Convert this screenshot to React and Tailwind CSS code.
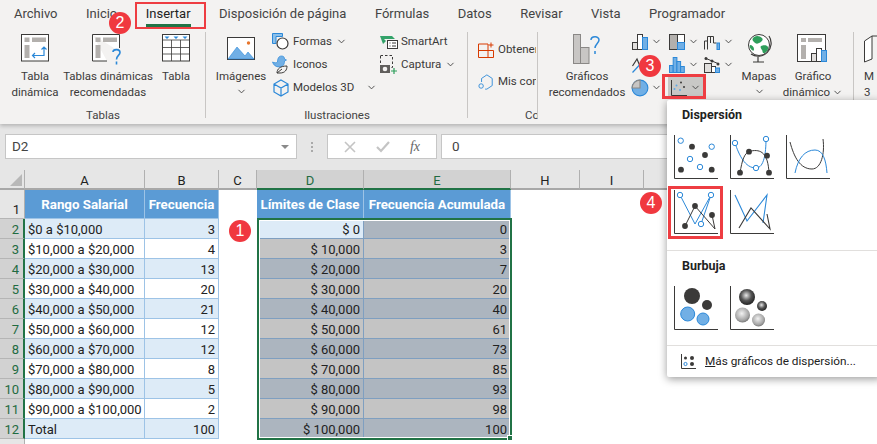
import { ChevronDown } from 'lucide-react';

const BLUE = '#2b88d8';
const DARK = '#3b3a39';
const GREY = '#b3b0ad';

const rangeRows = [
  ['$0 a $10,000', 3, '$ 0', 0],
  ['$10,000 a $20,000', 4, '$ 10,000', 3],
  ['$20,000 a $30,000', 13, '$ 20,000', 7],
  ['$30,000 a $40,000', 20, '$ 30,000', 20],
  ['$40,000 a $50,000', 21, '$ 40,000', 40],
  ['$50,000 a $60,000', 12, '$ 50,000', 61],
  ['$60,000 a $70,000', 12, '$ 60,000', 73],
  ['$70,000 a $80,000', 8, '$ 70,000', 85],
  ['$80,000 a $90,000', 5, '$ 80,000', 93],
  ['$90,000 a $100,000', 2, '$ 90,000', 98],
  ['Total', 100, '$ 100,000', 100],
];

function Chevron({ className = '' }) {
  return <ChevronDown className={`w-[11px] h-[11px] text-[#444] shrink-0 ${className}`} strokeWidth={2} />;
}

function Badge({ n, className }) {
  return (
    <div className={`absolute z-30 w-[22px] h-[22px] rounded-full bg-[#f0383f] text-white flex items-center justify-center text-[16px] font-['Liberation_Sans',sans-serif] ${className}`}>
      {n}
    </div>
  );
}

function PivotIcon() {
  return (
    <svg width="28" height="28" viewBox="0 0 28 28">
      <rect x=".5" y=".5" width="27" height="26.5" fill="#fff" stroke={DARK} />
      <rect x="3.5" y="3.5" width="5" height="4.5" fill={GREY} />
      <rect x="11" y="3.5" width="14" height="4.5" fill={GREY} />
      <rect x="3.5" y="11" width="5" height="13" fill={GREY} />
      <path d="M13 22.5h11v-8M21.5 16.5l2.5-2.5 2.5 2.5M15 20l-2.5 2.5 2.5 2.5" transform="translate(-1 -1)" fill="none" stroke={BLUE} strokeWidth="1.2" />
    </svg>
  );
}

function PivotHelpIcon() {
  return (
    <svg width="32" height="32" viewBox="0 0 32 32">
      <path d="M.5.5h27v17M15 27H.5V.5" fill="#fff" stroke={DARK} />
      <rect x="3.5" y="3.5" width="5" height="4.5" fill={GREY} />
      <rect x="11" y="3.5" width="14" height="4.5" fill={GREY} />
      <rect x="3.5" y="11" width="5" height="13" fill={GREY} />
      <rect x="15" y="14" width="16" height="18" fill="#f3f2f1" />
      <path d="M21 18c0-3 7-3.500 7 .5 0 3-3.500 3-3.500 7M24.500 27.500v3" fill="none" stroke={BLUE} strokeWidth="1.6" />
    </svg>
  );
}

function TableIcon() {
  return (
    <svg width="28" height="28" viewBox="0 0 28 28">
      <rect x=".5" y=".5" width="27" height="26.500" fill="#fff" stroke={DARK} />
      <path d="M.5 6h27M.5 13.500h27M.5 20h27M9.500 6v21M18.500 6v21" stroke={DARK} strokeWidth=".8" />
      <path d="M2.500 2.500h5L5 5zM11.500 2.500h5L14 5zM20.500 2.500h5L23 5z" fill={BLUE} />
    </svg>
  );
}

function PictureIcon() {
  return (
    <svg width="28" height="24" viewBox="0 0 28 24">
      <rect x=".5" y=".5" width="27" height="22" fill="#fff" stroke={DARK} />
      <path d="M1 22 10 10l8 9 3-4 6 7z" fill="#71afe5" stroke="#2b88d8" strokeWidth=".6" />
      <circle cx="21.500" cy="6" r="1.700" fill="#e8762c" />
    </svg>
  );
}

function ShapesIcon() {
  return (
    <svg width="18" height="18" viewBox="0 0 18 18">
      <path d="M.5.5h10v3H4v7H.5z" fill="#8cc0ea" stroke={BLUE} />
      <circle cx="10.500" cy="10.500" r="5.500" fill="#fff" stroke={DARK} strokeWidth="1.200" />
    </svg>
  );
}

function IconsIcon() {
  return (
    <svg width="18" height="19" viewBox="0 0 18 19">
      <path d="M.5 7c2 1 4 1 5 0 0-3 1-6 4-6 2 0 3 1 3 3l2 1-2 1c0 4-2 6-5 6-4 0-6-2-7-5z" fill="#71afe5" stroke={BLUE} strokeWidth=".7" />
      <path d="M5 18c0-4 3-7 10-7 0 4-2 7-7 7zM5 18l5-4" fill="#f3f2f1" stroke={DARK} />
    </svg>
  );
}

function CubeIcon() {
  return (
    <svg width="18" height="18" viewBox="0 0 18 18" fill="none" stroke={BLUE} strokeWidth="1.200">
      <path d="M9 1l7 4v8l-7 4-7-4V5zM2 5l7 4 7-4M9 9v8" />
    </svg>
  );
}

function SmartArtIcon() {
  return (
    <svg width="18" height="14" viewBox="0 0 18 14">
      <path d="M0 1h12l3 3H4l2 2-3 3z" fill="#33a36a" />
      <rect x="7.500" y="5.500" width="10" height="8" fill="#fff" stroke={DARK} />
      <path d="M9.500 8h1M12 8h4M9.500 11h1M12 11h4" stroke={DARK} />
    </svg>
  );
}

function CaptureIcon() {
  return (
    <svg width="18" height="19" viewBox="0 0 18 19">
      <rect x=".5" y=".5" width="12" height="12" fill="none" stroke={DARK} strokeDasharray="2.500 2" />
      <rect x="0" y="10" width="10" height="8" fill="#605e5c" />
      <circle cx="5" cy="14" r="2.300" fill="#f3f2f1" />
      <path d="M14 13v6M11 16h6" stroke="#2e9e5b" strokeWidth="1.200" />
    </svg>
  );
}

function GetAddinIcon() {
  return (
    <svg width="16" height="16" viewBox="0 0 16 16" fill="none" stroke="#d83b01" strokeWidth="1" className="shrink-0">
      <path d="M.5 2h9.500v13.500H.5zM.5 8.500H15.500V15.500H10M13 .5v5M10.500 3h5" />
    </svg>
  );
}

function MyAddinIcon() {
  return (
    <svg width="16" height="18" viewBox="0 0 18 18" fill="none" stroke={BLUE} strokeWidth="1" className="shrink-0">
      <path d="M4 9V5l6-4 6 4v8l-6 4H8" />
      <circle cx="3.500" cy="13.500" r="2.500" />
    </svg>
  );
}

function RecommendedChartIcon() {
  return (
    <svg width="29" height="30" viewBox="0 0 29 30">
      <rect x=".5" y=".5" width="7" height="29" fill="#c8c6c4" stroke="#8a8886" />
      <rect x="7.500" y="13.500" width="8.500" height="16" fill="#c8c6c4" stroke="#8a8886" />
      <path d="M18 6c0-4 8-4.500 8 0 0 3-4 4-4 8M22 17v3" fill="none" stroke={BLUE} strokeWidth="1.500" />
    </svg>
  );
}

// the small chart buttons in the Gráficos group
function MiniChart({ kind }) {
  const common = { width: 16, height: 16, viewBox: '0 0 16 16' };
  if (kind === 'bars') {
    return (
      <svg {...common}>
        <rect x=".5" y="8.500" width="5" height="7" fill="#e1dfdd" stroke={DARK} />
        <rect x="5.500" y=".5" width="5" height="15" fill="#fff" stroke={DARK} />
        <rect x="10.500" y="3.500" width="5" height="12" fill="#71afe5" stroke={BLUE} />
      </svg>
    );
  }
  if (kind === 'treemap') {
    return (
      <svg {...common}>
        <rect x=".5" y=".5" width="8" height="15" fill={GREY} stroke={DARK} />
        <rect x="8.500" y=".5" width="7" height="8" fill="#fff" stroke={DARK} />
        <rect x="8.500" y="8.500" width="7" height="7" fill="#71afe5" stroke={BLUE} />
      </svg>
    );
  }
  if (kind === 'waterfall') {
    return (
      <svg {...common} fill="none">
        <path d="M.5 15.500V7h3V2.500h6V9h3" stroke={DARK} />
        <rect x="13" y="9" width="2.500" height="6.500" fill="#71afe5" stroke={BLUE} />
        <path d="M3.500 7v8.500M6.500 2.500V9" stroke={DARK} />
      </svg>
    );
  }
  if (kind === 'line') {
    return (
      <svg {...common} fill="none">
        <path d="M.5 15.500 14 1" stroke={BLUE} strokeWidth="1.200" />
        <path d="M.5 9 5 2l5 12" stroke={DARK} strokeWidth="1.200" />
      </svg>
    );
  }
  if (kind === 'histogram') {
    return (
      <svg {...common}>
        <rect x=".5" y="8.500" width="3.700" height="7" fill="#71afe5" stroke={BLUE} />
        <rect x="4.200" y=".5" width="3.700" height="15" fill="#71afe5" stroke={BLUE} />
        <rect x="7.900" y="4.500" width="3.700" height="11" fill="#71afe5" stroke={BLUE} />
        <rect x="11.600" y="9.500" width="3.700" height="6" fill="#71afe5" stroke={BLUE} />
      </svg>
    );
  }
  if (kind === 'combo') {
    return (
      <svg {...common}>
        <rect x=".5" y="6.500" width="7" height="9" fill="#e1dfdd" stroke={DARK} />
        <rect x="7.500" y="9.500" width="4" height="6" fill="#fff" stroke={DARK} />
        <rect x="11.500" y="11" width="4" height="4.500" fill="#71afe5" stroke={BLUE} />
        <path d="M1 1l7 3 7 3" stroke={DARK} fill="none" />
        <circle cx="2" cy="1.500" r="1.500" fill={DARK} />
        <circle cx="8" cy="4" r="1.500" fill={DARK} />
        <circle cx="14" cy="7" r="1.500" fill={DARK} />
      </svg>
    );
  }
  return (
    <svg {...common} width="18" height="18">
      <circle cx="8" cy="8" r="7" fill="#71afe5" stroke={BLUE} />
      <path d="M8 8V1a7 7 0 0 0-7 7z" fill="#c8c6c4" stroke="#8a8886" />
    </svg>
  );
}

function ScatterMini() {
  return (
    <svg width="16" height="16" viewBox="0 0 16 16">
      <path d="M.5 0v15.500H16" fill="none" stroke={DARK} />
      <circle cx="10" cy="2.500" r="1" fill={DARK} />
      <circle cx="5.500" cy="5.500" r="1" fill="#5ea9e6" />
      <circle cx="3.500" cy="9" r="1" fill="#5ea9e6" />
      <circle cx="9" cy="10" r="1" fill="#5ea9e6" />
      <circle cx="13" cy="7" r="1" fill={DARK} />
    </svg>
  );
}

function GlobeIcon() {
  return (
    <svg width="28" height="30" viewBox="0 0 28 30">
      <path d="M24 3a13 13 0 0 1-18 18M13 24v5M8 29h11" fill="none" stroke={DARK} strokeWidth="1.200" />
      <circle cx="14" cy="12" r="10.500" fill="#fff" stroke={DARK} />
      <path d="M9 4c3-2 6-1 8 1s-1 4-3 5-3 1-5-1-2-3 0-5zM16 13c3-1 6-1 7 1s-2 6-4 6-1-2-2-3-2-3-1-4zM5 12c2 0 4 2 4 4s-1 2-2 1-3-3-2-5z" fill="#2e9e5b" />
    </svg>
  );
}

function PivotChartIcon() {
  return (
    <svg width="32" height="30" viewBox="0 0 32 30">
      <rect x=".5" y=".5" width="28" height="27" fill="#fff" stroke={DARK} />
      <rect x="4" y="4" width="5" height="4" fill={GREY} />
      <rect x="11" y="4" width="14" height="4" fill={GREY} />
      <rect x="4" y="11" width="5" height="14" fill={GREY} />
      <rect x="14.500" y="19.500" width="5" height="8" fill="#e1dfdd" stroke={DARK} />
      <rect x="19.500" y="14.500" width="5" height="13" fill="#fff" stroke={DARK} />
      <rect x="24.500" y="16.500" width="5" height="11" fill="#71afe5" stroke={BLUE} />
    </svg>
  );
}

function Axes({ size = 44 }) {
  return <path d={`M.5 0V${size - .5}H${size}`} fill="none" stroke={DARK} strokeWidth="1" />;
}

function Open({ x, y }) {
  return <circle cx={x} cy={y} r="2.700" fill="#fff" stroke={BLUE} strokeWidth="1" />;
}

function Solid({ x, y }) {
  return <circle cx={x} cy={y} r="2.900" fill={DARK} />;
}

function Thumb({ children }) {
  return <svg width="44" height="44" viewBox="0 0 44 44"><Axes />{children}</svg>;
}

function BubbleShade({ x, y, r, id }) {
  return <circle cx={x} cy={y} r={r} fill={`url(#${id})`} />;
}

function LargeButton({ icon, lines, width }) {
  return (
    <div className={`flex flex-col items-center shrink-0 ${width}`}>
      <div className="h-[41px] pt-[7px] flex justify-center">{icon}</div>
      {lines.map((l) => (
        <div key={l} className="h-4 leading-4 whitespace-nowrap">{l}</div>
      ))}
    </div>
  );
}

function SmallButton({ icon, label, chevron }) {
  return (
    <div className="h-[23px] flex items-center gap-[3px] whitespace-nowrap">
      <div className="w-[18px] flex justify-center shrink-0">{icon}</div>
      {label}
      {chevron && <Chevron className="ml-[1px]" />}
    </div>
  );
}

function Group({ width, label, labelClass = 'justify-center', children }) {
  return (
    <div className={`relative shrink-0 h-full flex flex-col ${width}`}>
      <div className="flex-1 flex min-h-0">{children}</div>
      <div className={`h-[16px] leading-4 flex overflow-hidden text-[#444] whitespace-nowrap ${labelClass}`}>{label}</div>
      <div className="absolute right-0 top-[5px] bottom-[5px] w-px bg-[#c8c6c4]" />
    </div>
  );
}

function Ribbon() {
  return (
    <div className="relative z-10 h-[124px] bg-[#f3f2f1] shadow-[0_2px_4px_rgba(0,0,0,0.22)] text-[11.5px] text-[#3b3a39] overflow-hidden">
      <div className="h-[27px] flex items-center pl-[14px] gap-[28.5px] text-[13px] text-[#444]">
        <span>Archivo</span>
        <span>Inicio</span>
        <span className="relative text-[#222]">
          Insertar
          <span className="absolute left-0 right-0 -bottom-[4px] h-[3px] bg-[#217346]" />
        </span>
        <span>Disposición de página</span>
        <span>Fórmulas</span>
        <span>Datos</span>
        <span>Revisar</span>
        <span>Vista</span>
        <span>Programador</span>
      </div>
      <div className="h-[96px] flex">
        <Group width="w-[206px]" label="Tablas">
          <div className="flex pl-[4px]">
            <LargeButton width="w-[62px]" icon={<PivotIcon />} lines={['Tabla', 'dinámica']} />
            <LargeButton width="w-[84px]" icon={<PivotHelpIcon />} lines={['Tablas dinámicas', 'recomendadas']} />
            <LargeButton width="w-[52px]" icon={<TableIcon />} lines={['Tabla']} />
          </div>
        </Group>
        <Group width="w-[262px]" label="Ilustraciones">
          <div className="flex pl-[4px]">
            <div className="w-[62px] shrink-0 flex flex-col items-center">
              <div className="h-[41px] pt-[10px]"><PictureIcon /></div>
              <div className="h-4 leading-4">Imágenes</div>
              <Chevron className="mt-[2px]" />
            </div>
            <div className="w-[108px] shrink-0 pt-[3px]">
              <SmallButton icon={<ShapesIcon />} label="Formas" chevron />
              <SmallButton icon={<IconsIcon />} label="Iconos" />
              <SmallButton icon={<CubeIcon />} label={<span className="mr-[8px]">Modelos 3D</span>} chevron />
            </div>
            <div className="pt-[3px]">
              <SmallButton icon={<SmartArtIcon />} label="SmartArt" />
              <SmallButton icon={<CaptureIcon />} label="Captura" chevron />
            </div>
          </div>
        </Group>
        <Group width="w-[70px]" label="Complementos" labelClass="pl-[57px]">
          <div className="pl-[10px] pt-[7px] w-[68px] overflow-hidden">
            <div className="h-[32px] flex items-center gap-[4px] whitespace-nowrap"><GetAddinIcon />Obtener complementos</div>
            <div className="h-[32px] flex items-center gap-[4px] whitespace-nowrap"><MyAddinIcon />Mis complementos</div>
          </div>
        </Group>
        <Group width="w-[316px]" label="">
          <div className="flex pl-[7px]">
            <LargeButton width="w-[84px]" icon={<RecommendedChartIcon />} lines={['Gráficos', 'recomendados']} />
            <div className="w-[103px] shrink-0 pt-[3px] pl-[3px] grid grid-cols-[37px_35px_31px] grid-rows-[23px_23px_23px]">
              {['bars', 'treemap', 'waterfall', 'line', 'histogram', 'combo'].map((k) => (
                <div key={k} className="flex items-center gap-[3px]"><MiniChart kind={k} /><Chevron /></div>
              ))}
              <div className="flex items-center gap-[2px] -ml-[1px]"><MiniChart kind="pie" /><Chevron /></div>
              <div className="col-span-2 flex items-center">
                <div className="w-[36px] h-[21px] -ml-[1px] bg-[#c8c8c6] flex items-center justify-center gap-[3px]">
                  <ScatterMini /><Chevron />
                </div>
              </div>
            </div>
            <div className="w-[52px] shrink-0 flex flex-col items-center ml-[1px]">
              <div className="h-[41px] pt-[6px]"><GlobeIcon /></div>
              <div className="h-4 leading-4">Mapas</div>
              <Chevron className="mt-[2px]" />
            </div>
            <div className="w-[56px] shrink-0 flex flex-col items-center">
              <div className="h-[41px] pt-[7px]"><PivotChartIcon /></div>
              <div className="h-4 leading-4">Gráfico</div>
              <div className="h-4 leading-4 whitespace-nowrap flex items-center gap-[2px]">dinámico<Chevron /></div>
            </div>
          </div>
        </Group>
        <div className="pl-[10px] pt-[8px] flex flex-col">
          <div className="h-[33px] w-[30px]">
            <svg width="30" height="30" viewBox="0 0 30 30" fill="none" stroke={DARK}>
              <path d="M.5 6 8 1v23L.5 27z" fill="#fff" />
              <path d="M8 1h20" />
            </svg>
          </div>
          <div className="h-4 leading-4">M</div>
          <div className="h-4 leading-4">3</div>
        </div>
      </div>
    </div>
  );
}

function FormulaBar() {
  return (
    <div className="h-[46px] bg-[#e6e6e6] flex items-start pt-[10px] pl-[5px] text-[13.5px] text-[#444]">
      <div className="w-[292px] h-[25px] bg-white border border-[#c6c6c6] flex items-center justify-between pl-[6px] pr-[7px]">
        <span>D2</span>
        <span className="w-0 h-0 border-l-[4px] border-r-[4px] border-t-[4px] border-l-transparent border-r-transparent border-t-[#8a8a8a]" />
      </div>
      <div className="w-[30px] h-[25px] flex flex-col items-center justify-center gap-[2px]">
        <span className="w-[2px] h-[2px] bg-[#aaa]" />
        <span className="w-[2px] h-[2px] bg-[#aaa]" />
        <span className="w-[2px] h-[2px] bg-[#aaa]" />
      </div>
      <div className="w-[110px] h-[25px] bg-white border border-[#c6c6c6] flex items-center justify-around px-[6px] text-[#bbb]">
        <svg width="12" height="12" viewBox="0 0 12 12" stroke="#c4c4c4" strokeWidth="1.600"><path d="M1 1l10 10M11 1 1 11" /></svg>
        <svg width="14" height="12" viewBox="0 0 14 12" fill="none" stroke="#c4c4c4" strokeWidth="2.200"><path d="M1 6l4 4 8-9" /></svg>
        <span className="font-['Liberation_Serif',serif] italic text-[#666] text-[14px]">fx</span>
      </div>
      <div className="ml-[4px] flex-1 h-[25px] bg-white border border-[#c6c6c6] flex items-center pl-[10px]">0</div>
    </div>
  );
}

function ColHeader({ label, active, last }) {
  return (
    <div className={`h-[20px] pt-[2px] flex items-center justify-center border-b-2 ${last ? '' : 'border-r border-r-[#b0b0b0]'} ${active ? 'bg-[#d2d2d2] text-[#1f6b41] border-b-[#217346]' : 'bg-[#e6e6e6] text-[#222] border-b-[#a8a8a8]'}`}>
      {label}
    </div>
  );
}

function RowHeader({ n, tall }) {
  return (
    <div className={`${tall ? 'h-[29px] items-end pb-[2px] bg-[#e6e6e6] text-[#222] border-r-[#b0b0b0] border-r' : 'h-[20px] pt-[1px] items-center bg-[#d2d2d2] text-[#1f6b41] border-r-2 border-r-[#217346]'} flex justify-end pr-[4px] border-b border-b-[#b5b5b5]`}>
      {n}
    </div>
  );
}

function Sheet() {
  const bodyBorder = 'border-r border-b border-[#9dc3e6] pt-[1px]';
  const selBorder = 'border-r border-b border-[#7f9fc0] pt-[1px]';
  const headCell = 'bg-[#5b9bd5] text-white font-bold text-[13.3px] flex items-center justify-center whitespace-nowrap pt-[1px]';
  return (
    <div className="relative flex-1 bg-white text-[13px] text-[#222] leading-none">
      <div className="grid grid-cols-[25px_120px_74px_38px_107px_147px_69px_64px_1fr] h-full grid-rows-[20px_29px_repeat(11,20px)_1fr]">
        <div className="h-[20px] bg-[#e6e6e6] border-r border-b-2 border-r-[#b0b0b0] border-b-[#a8a8a8] relative overflow-hidden">
          <span className="absolute right-[2px] bottom-[2px] w-0 h-0 border-l-[12px] border-b-[12px] border-l-transparent border-b-[#b8b8b8]" />
        </div>
        <ColHeader label="A" />
        <ColHeader label="B" />
        <ColHeader label="C" />
        <ColHeader label="D" active />
        <ColHeader label="E" active />
        <ColHeader label="H" />
        <ColHeader label="I" />
        <ColHeader label="" last />

        <RowHeader n={1} tall />
        <div className={`${headCell} ${bodyBorder}`}>Rango Salarial</div>
        <div className={`${headCell} ${bodyBorder}`}>Frecuencia</div>
        <div />
        <div className={`${headCell} ${bodyBorder}`}>Límites de Clase</div>
        <div className={`${headCell} ${bodyBorder}`}>Frecuencia Acumulada</div>
        <div className="col-span-3" />

        {rangeRows.map((row, i) => {
          const band = i % 2 === 0;
          const left = band ? 'bg-[#ddebf7]' : 'bg-white';
          const sel = band ? 'bg-[#acb5bf]' : 'bg-[#c4c4c4]';
          return [
            <RowHeader key={`h${i}`} n={i + 2} />,
            <div key={`a${i}`} className={`${left} ${bodyBorder} flex items-center pl-[3px] whitespace-nowrap`}>{row[0]}</div>,
            <div key={`b${i}`} className={`${left} ${bodyBorder} flex items-center justify-end pr-[3px]`}>{row[1]}</div>,
            <div key={`c${i}`} />,
            <div key={`d${i}`} className={`${i === 0 ? 'bg-[#ddebf7]' : sel} ${selBorder} flex items-center justify-end pr-[3px]`}>{row[2]}</div>,
            <div key={`e${i}`} className={`${sel} ${selBorder} flex items-center justify-end pr-[3px]`}>{row[3]}</div>,
            <div key={`r${i}`} className="col-span-3" />,
          ];
        })}
        <div className="bg-[#e6e6e6] border-r border-[#b0b0b0]" />
      </div>
      {/* selected range */}
      <div className="absolute left-[257px] top-[48px] w-[255px] h-[222px] border-2 border-[#217346] pointer-events-none">
        <div className="w-full h-full border border-white" />
        <div className="absolute -right-[3px] -bottom-[3px] w-[6px] h-[6px] bg-[#217346] border border-white" />
      </div>
    </div>
  );
}

function ScatterMenu() {
  return (
    <div className="absolute z-20 left-[667px] top-[100px] w-[215px] h-[277px] bg-white shadow-[0_2px_8px_rgba(0,0,0,0.4)] text-[12.5px] text-[#222] rounded-[2px]">
      <div className="h-[35px] pl-[15px] pb-[5px] pt-[1px] flex items-center font-bold">Dispersión</div>
      <div className="pl-[7px] grid grid-cols-[56px_56px_56px] grid-rows-[55px_60px]">
        <Thumb>
          <Open x="6.700" y="5.700" /><Solid x="18" y="11.700" /><Open x="37.700" y="11.700" /><Solid x="31" y="20" />
          <Open x="16" y="24" /><Open x="26" y="32" /><Solid x="7" y="34.700" /><Solid x="37.700" y="34.700" />
        </Thumb>
        <Thumb>
          <path d="M5 8c4 12 10 25 21 25 8 0 10-15 10-29" fill="none" stroke={BLUE} />
          <path d="M10 38c2-12 4-21 11-22 10-2 17 2 18 22" fill="none" stroke={DARK} />
          <Open x="5" y="8" /><Open x="36" y="4" /><Solid x="19" y="16.700" /><Solid x="37" y="20.700" />
          <Open x="26" y="33" /><Solid x="10" y="37.700" /><Solid x="39" y="37.700" />
        </Thumb>
        <Thumb>
          <path d="M4 7c4 15 10 27 22 27 9 0 13-15 11-30" fill="none" stroke={DARK} />
          <path d="M9 38c3-15 10-23 20-23 8 0 11 10 12 23" fill="none" stroke={BLUE} />
        </Thumb>
        <Thumb>
          <path d="M6 5 21 34 37 5 27 34" fill="none" stroke={BLUE} />
          <path d="M11 36 21 16l20 23-3-14" fill="none" stroke={DARK} />
          <Open x="6" y="5" /><Open x="37" y="5" /><Solid x="21" y="16" /><Solid x="38" y="25" />
          <Open x="27" y="34" /><Solid x="11" y="36" />
        </Thumb>
        <Thumb>
          <path d="M5 5 17 31 37 5 33 33" fill="none" stroke={BLUE} strokeWidth="1.100" />
          <path d="M9 38 21 18l19 21-3-15" fill="none" stroke={DARK} strokeWidth="1.100" />
        </Thumb>
      </div>
      <div className="h-px bg-[#e1dfdd]" />
      <div className="h-[35px] pl-[15px] pb-[5px] flex items-center font-bold">Burbuja</div>
      <div className="pl-[7px] grid grid-cols-[56px_56px] h-[59px]">
        <Thumb>
          <circle cx="18" cy="10" r="8" fill={DARK} />
          <circle cx="33" cy="19" r="5" fill={DARK} />
          <circle cx="13.700" cy="28" r="7" fill="#71afe5" stroke={BLUE} />
          <circle cx="29" cy="33" r="6" fill="#71afe5" stroke={BLUE} />
        </Thumb>
        <Thumb>
          <defs>
            <radialGradient id="dark3d" cx=".45" cy=".4" r=".6">
              <stop offset="0" stopColor="#e8e8e8" />
              <stop offset=".55" stopColor="#555" />
              <stop offset="1" stopColor="#222" />
            </radialGradient>
            <radialGradient id="light3d" cx=".45" cy=".4" r=".65">
              <stop offset="0" stopColor="#f2f2f2" />
              <stop offset=".7" stopColor="#a5a5a5" />
              <stop offset="1" stopColor="#6a6a6a" />
            </radialGradient>
          </defs>
          <BubbleShade x="17" y="11" r="8" id="dark3d" />
          <BubbleShade x="32" y="20" r="5" id="dark3d" />
          <BubbleShade x="12.500" y="29" r="7.500" id="light3d" />
          <BubbleShade x="28.500" y="34" r="6.500" id="light3d" />
        </Thumb>
      </div>
      <div className="h-px bg-[#e1dfdd]" />
      <div className="h-[31px] pl-[14px] flex items-center gap-[9px] whitespace-nowrap text-[11.8px]">
        <svg width="15" height="15" viewBox="0 0 15 15">
          <path d="M.5 0v14.500H15" fill="none" stroke={DARK} />
          <circle cx="4.500" cy="4" r="1.500" fill={DARK} />
          <circle cx="11" cy="4" r="2" fill={DARK} />
          <circle cx="4.500" cy="10" r="1.600" fill="#fff" stroke={BLUE} />
          <circle cx="11" cy="10" r="2" fill={DARK} />
        </svg>
        <span><span className="underline">M</span>ás gráficos de dispersión...</span>
      </div>
    </div>
  );
}

export default function App() {
  return (
    <div className="relative w-[877px] h-[444px] overflow-hidden flex flex-col bg-white font-['Roboto',sans-serif]">
      <Ribbon />
      <FormulaBar />
      <Sheet />
      <ScatterMenu />

      <div className="absolute z-30 left-[135px] top-[2px] w-[71px] h-[27px] border-[2.5px] border-[#ee3d42]" />
      <div className="absolute z-30 left-[662px] top-[74px] w-[44px] h-[25px] border-[3px] border-[#ee3d42]" />
      <div className="absolute z-30 left-[668px] top-[186px] w-[55px] h-[53px] border-[3px] border-[#ee3d42]" />

      <Badge n={1} className="left-[229px] top-[220px]" />
      <Badge n={2} className="left-[109px] top-[12px]" />
      <Badge n={3} className="left-[639px] top-[55px]" />
      <Badge n={4} className="left-[640px] top-[192px]" />
    </div>
  );
}
